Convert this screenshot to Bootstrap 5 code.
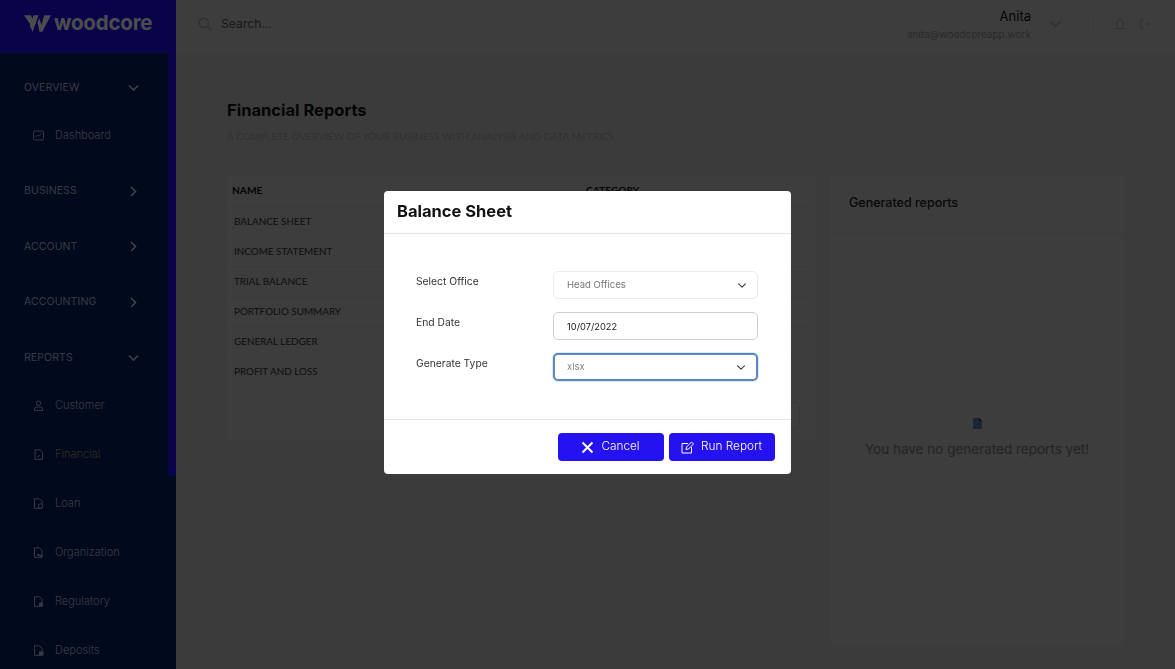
<!DOCTYPE html>
<html lang="en">
<head>
<meta charset="utf-8">
<title>Financial Reports</title>
<link href="https://cdn.jsdelivr.net/npm/bootstrap@5.3.0/dist/css/bootstrap.min.css" rel="stylesheet">
<style>
body{font-family:"Inter",sans-serif;background:#c6c6c6;overflow:hidden;color:#111}
.app-shell{height:669px;overflow:hidden}
.side-panel{width:176px;flex:none;background:#051e62}
.brand-bar{height:53px;flex:none;background:#1e0cf7;padding:0 0 7px 24px;gap:3px}
.brand-name{font-family:"Inter",sans-serif;font-weight:700;font-size:20.500px;color:#fff;letter-spacing:-.2px;line-height:1}
.side-nav{width:168px;padding-top:7px}
.side-rail{width:8px}
.rail-thumb{height:423px;background:#1e0cf7}
.nav-head{height:55.5px;padding:0 29px 0 24px;font-size:10.5px;letter-spacing:.1px;color:#b8c0d8}
.nav-sub{margin:-5px 0 5px}
.nav-sub-first{margin:-5px 0 4px}
.nav-leaf{height:49px;padding-left:33px;gap:11px;font-size:11px;color:#b8c0d8;font-weight:300}
.nav-leaf.is-active{color:#99995f}
.main-pane{min-width:0}
.top-bar{height:53px;padding:0 0 5px 22px;background:#cdcdcd}
.search-word{font-size:12.2px;color:#555;margin-left:9px}
.user-name{font-size:13px;line-height:16px;color:#111}
.user-mail{font-size:10px;line-height:14px;color:#8b8b8b;margin-top:3px}
.top-rule{width:1px;height:28px;background:#bfbfbf;margin:0 20px 0 31px}
.top-chev{margin-left:18px}
.top-exit{margin:0 25px 0 14px}
.page-body{padding:47px 51px 0 51px}
.page-title{font-size:16.5px;font-weight:700;margin:0;line-height:20px}
.page-sub{font-family:"Lato",sans-serif;font-size:10.1px;color:#a3a3a3;margin:9px 0 0;line-height:14px}
.content-split{margin-top:32px;gap:15px}
.report-table-card{width:588px;height:265px;background:#cbcbcb;flex:none;padding:0 2px}
.report-head{height:31.5px;flex:none;font-family:"Lato",sans-serif;font-size:10.2px;font-weight:700;padding-left:3px;padding-bottom:7px;border-bottom:1px solid #c0c0c0;color:#111}
.report-head span:first-child{width:354px}
.report-line{height:30px;flex:none;font-family:"Lato",sans-serif;font-size:9.9px;padding-left:5px;border-bottom:1px solid #c3c3c3;color:#333}
.report-last{border-bottom:0}
.ghost-btn{width:56px;height:27px;border:1px solid #b9b9b9;border-radius:4px;margin:15.5px 13px 0 auto}
.gen-card{width:294px;height:470px;background:#cbcbcb;flex:none}
.gen-head{height:58px;padding-left:19px;font-size:12.5px;font-weight:500;color:#222;border-bottom:1px solid #c1c1c1}
.gen-empty{height:412px;padding-top:185px;font-size:13.5px;color:#777}
.gen-empty svg{margin-bottom:10px}
.modal-backdrop.show{opacity:.7}
.sheet-dialog{--bs-modal-width:407px;margin-top:191px;margin-bottom:0}
.sheet-content{height:283px;border-radius:4px;border:0}
.sheet-head{height:43px;padding:0 13px 2px;border-bottom:1px solid #e4e4e4}
.sheet-title{font-size:16.500px;font-weight:700;margin:0;color:#111}
.sheet-body{padding:37px 32px 0;height:185px;flex:none}
.field-line{margin-bottom:13px}
.field-label{width:137px;font-size:10.3px;color:#333;line-height:20px;flex:none}
.field-select,.field-input{width:205px;height:28px;min-height:0;font-size:9.5px;padding:0 13px;border-radius:5px;flex:none;box-shadow:none}
.field-select{color:#777;padding-top:1px;background-size:12px 9px;background-position:right 9px center;border:1px solid #ececec}
.field-input{color:#222;border:1px solid #cfcfcf;font-size:9.3px}
.field-select.is-focused{border:2px solid #5b86c0;color:#888;padding-left:12px;box-shadow:0 0 0 1px #dce8f6}
.sheet-foot{height:55px;padding:0 16.5px 0 0;gap:5px;border-top:1px solid #e4e4e4}
.sheet-foot .act-btn{width:106px;height:28px;margin:0;padding:0;background:#2512f0;border:0;border-radius:4px;color:#fff;font-size:11.8px;font-weight:300;gap:7px}
</style>
</head>
<body>
<div class="app-shell d-flex">
  <aside class="side-panel d-flex flex-column">
    <div class="brand-bar d-flex align-items-center">
      <svg width="27" height="18" viewBox="0 0 28 18"><g fill="#fff"><polygon points="0,1 7,1 9.500,6 7,11"/><polygon points="10,1 15,1 9,18 6,12"/><polygon points="14,8 16,4 18,11 21,1 28,1 19,18 16,18"/></g></svg>
      <span class="brand-name">woodcore</span>
    </div>
    <div class="d-flex flex-grow-1">
      <nav class="side-nav">
        <div class="nav-head d-flex align-items-center justify-content-between">OVERVIEW
          <svg width="11" height="8" viewBox="0 0 11 8"><path d="M1 1.500l4.500 4.500L10 1.500" fill="none" stroke="#d8d8d8" stroke-width="1.600"/></svg></div>
        <div class="nav-sub-first">
          <div class="nav-leaf d-flex align-items-center"><svg width="11" height="11" viewBox="0 0 11 11" fill="none" stroke="#b8c0d8"><rect x=".5" y="1" width="10" height="9" rx="1.500"/><path d="M2.500 7l2-2 1.500 1 2.500-2.500" stroke-width=".8"/></svg>Dashboard</div>
        </div>
        <div class="nav-head d-flex align-items-center justify-content-between">BUSINESS
          <svg width="11" height="11" viewBox="0 0 11 11"><path d="M3 1l4.500 4.500L3 10" fill="none" stroke="#d8d8d8" stroke-width="1.600"/></svg></div>
        <div class="nav-head d-flex align-items-center justify-content-between">ACCOUNT
          <svg width="11" height="11" viewBox="0 0 11 11"><path d="M3 1l4.500 4.500L3 10" fill="none" stroke="#d8d8d8" stroke-width="1.600"/></svg></div>
        <div class="nav-head d-flex align-items-center justify-content-between">ACCOUNTING
          <svg width="11" height="11" viewBox="0 0 11 11"><path d="M3 1l4.500 4.500L3 10" fill="none" stroke="#d8d8d8" stroke-width="1.600"/></svg></div>
        <div class="nav-head d-flex align-items-center justify-content-between">REPORTS
          <svg width="11" height="8" viewBox="0 0 11 8"><path d="M1 1.500l4.500 4.500L10 1.500" fill="none" stroke="#d8d8d8" stroke-width="1.600"/></svg></div>
        <div class="nav-sub">
          <div class="nav-leaf d-flex align-items-center"><svg width="11" height="11" viewBox="0 0 11 11" fill="none" stroke="#b8c0d8"><circle cx="5.500" cy="3.200" r="2.200"/><path d="M1.500 10.500V9a2 2 0 0 1 2-2h4a2 2 0 0 1 2 2v1.500z"/></svg>Customer</div>
          <div class="nav-leaf is-active d-flex align-items-center"><svg width="11" height="11" viewBox="0 0 11 11" fill="none" stroke="#b8c0d8"><path d="M2 .8h5l2.500 2.500v7H2z"/><path d="M4 7l1 1 2-2" stroke-width=".8"/></svg>Financial</div>
          <div class="nav-leaf d-flex align-items-center"><svg width="11" height="11" viewBox="0 0 11 11" fill="none" stroke="#b8c0d8"><path d="M1.500 .8h5L9 3.300v7H1.500z"/><circle cx="7.500" cy="8" r="2.200" fill="#051e62"/></svg>Loan</div>
          <div class="nav-leaf d-flex align-items-center"><svg width="11" height="11" viewBox="0 0 11 11" fill="none" stroke="#b8c0d8"><path d="M1.500 .8h5L9 3.300v7H1.500z"/><path d="M4 7.500l5.500 2" stroke-width="1.400"/></svg>Organization</div>
          <div class="nav-leaf d-flex align-items-center"><svg width="11" height="11" viewBox="0 0 11 11" fill="none" stroke="#b8c0d8"><path d="M1.500 .8h5L9 3.300v7H1.500z"/><circle cx="8" cy="8.500" r="1.800" fill="#b8c0d8"/></svg>Regulatory</div>
          <div class="nav-leaf d-flex align-items-center"><svg width="11" height="11" viewBox="0 0 11 11" fill="none" stroke="#b8c0d8"><path d="M1.500 .8h5L9 3.300v7H1.500z"/><rect x="6.500" y="7" width="3.500" height="3" fill="#b8c0d8"/></svg>Deposits</div>
        </div>
      </nav>
      <div class="side-rail"><div class="rail-thumb"></div></div>
    </div>
  </aside>
  <main class="main-pane flex-grow-1">
    <header class="top-bar d-flex align-items-center">
      <svg width="14" height="14" viewBox="0 0 14 14" fill="none" stroke="#9a9a9a" stroke-width="1.200"><circle cx="5.800" cy="5.800" r="4.600"/><path d="M9.300 9.300L13 13"/></svg>
      <span class="search-word">Search...</span>
      <div class="ms-auto d-flex align-items-center">
        <div class="text-end"><div class="user-name">Anita</div><div class="user-mail">anita@woodcoreapp.work</div></div>
        <svg class="top-chev" width="13" height="8" viewBox="0 0 13 8"><path d="M1 1l5.500 5.500L12 1" fill="none" stroke="#999" stroke-width="1.300"/></svg>
        <div class="top-rule"></div>
        <svg width="12" height="12" viewBox="0 0 12 12" fill="none" stroke="#a5a5a5"><path d="M3 10V5a3 3.500 0 0 1 6 0v5M1 10.500h10"/></svg>
        <svg class="top-exit" width="10" height="10" viewBox="0 0 10 10" fill="none" stroke="#a5a5a5"><path d="M4 .5H1v9h3M3.500 5h6M7.500 3l2 2-2 2"/></svg>
      </div>
    </header>
    <section class="page-body">
      <h1 class="page-title">Financial Reports</h1>
      <p class="page-sub">A COMPLETE OVERVIEW OF YOUR BUSINESS WITH ANALYSIS AND DATA METRICS</p>
      <div class="content-split d-flex">
        <div class="report-table-card d-flex flex-column">
          <div class="report-head d-flex align-items-end"><span>NAME</span><span>CATEGORY</span></div>
          <div class="report-line d-flex align-items-center">BALANCE SHEET</div>
          <div class="report-line d-flex align-items-center">INCOME STATEMENT</div>
          <div class="report-line d-flex align-items-center">TRIAL BALANCE</div>
          <div class="report-line d-flex align-items-center">PORTFOLIO SUMMARY</div>
          <div class="report-line d-flex align-items-center">GENERAL LEDGER</div>
          <div class="report-line report-last d-flex align-items-center">PROFIT AND LOSS</div>
          <div class="ghost-btn"></div>
        </div>
        <div class="gen-card">
          <div class="gen-head d-flex align-items-center">Generated reports</div>
          <div class="gen-empty text-center">
            <svg class="d-block mx-auto" width="9" height="11" viewBox="0 0 9 11"><path d="M0 0h6l3 3v8H0z" fill="#5f7fa8"/><path d="M6 0l3 3H6z" fill="#222"/></svg>
            You have no generated reports yet!
          </div>
        </div>
      </div>
    </section>
  </main>
</div>
<div class="modal-backdrop show"></div>
<div class="modal d-block" tabindex="-1">
  <div class="modal-dialog sheet-dialog">
    <div class="modal-content sheet-content">
      <div class="modal-header sheet-head"><h5 class="modal-title sheet-title">Balance Sheet</h5></div>
      <div class="modal-body sheet-body">
        <div class="field-line d-flex"><label class="field-label">Select Office</label><select class="form-select field-select"><option>Head Offices</option></select></div>
        <div class="field-line d-flex"><label class="field-label">End Date</label><input class="form-control field-input" type="text" value="10/07/2022"></div>
        <div class="field-line d-flex"><label class="field-label">Generate Type</label><select class="form-select field-select is-focused"><option>xlsx</option></select></div>
      </div>
      <div class="modal-footer sheet-foot align-items-center">
        <button type="button" class="btn act-btn d-flex align-items-center justify-content-center"><svg width="13" height="13" viewBox="0 0 13 13"><path d="M1.500 1.500l10 10M11.500 1.500l-10 10" stroke="#fff" stroke-width="2"/></svg>Cancel</button>
        <button type="button" class="btn act-btn d-flex align-items-center justify-content-center"><svg width="13" height="13" viewBox="0 0 13 13" fill="none" stroke="#fff"><path d="M7 2.500H1v9.500h9.500V6"/><path d="M5 8.500l.5-2.500L10.500 1l2 2-5 5z"/></svg>Run Report</button>
      </div>
    </div>
  </div>
</div>
<script src="https://cdn.jsdelivr.net/npm/bootstrap@5.3.0/dist/js/bootstrap.bundle.min.js"></script>
</body>
</html>
